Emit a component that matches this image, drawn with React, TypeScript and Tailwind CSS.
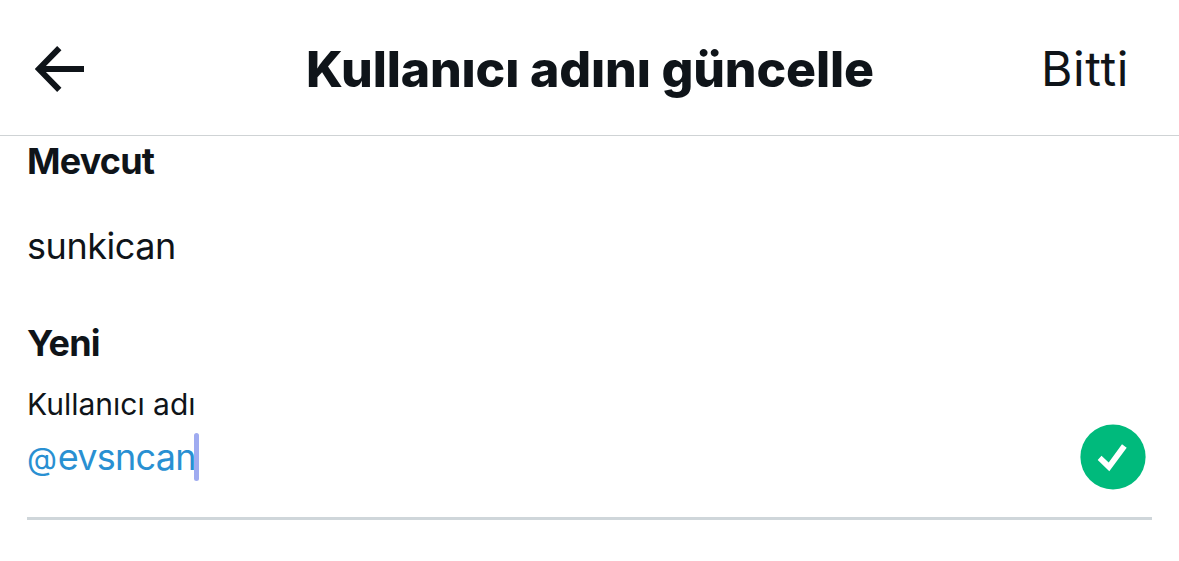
import React, { useState } from 'react'

const BackArrow = () => (
  <svg width="50" height="46" viewBox="0 0 50 46" fill="none" stroke="currentColor">
    <path d="M24.3 2.2L3.9 23L24.3 43.8" strokeWidth="6" />
    <path d="M4.5 23H49" strokeWidth="6" />
  </svg>
)

const ValidBadge = () => (
  <svg width="66" height="66" viewBox="0 0 66 66">
    <circle cx="33" cy="33" r="32.6" fill="#00ba7c" />
    <path d="M17.7 36L29.3 47.2L46.7 23.7L42 20.2L28.7 38.6L21.5 31.7Z" fill="#fff" />
  </svg>
)

const App = () => {
  const [current] = useState('sunkican')
  const [username] = useState('evsncan')

  return (
    <div className="h-[561px] w-[1179px] overflow-hidden bg-white font-['Inter',sans-serif] text-[#0f1419]">
      {/* Header */}
      <header className="flex h-[136px] items-center border-b border-[#cfd3d5] pt-[3px] pr-[50px] pl-[35px]">
        <button type="button" className="w-[271px]" aria-label="Geri">
          <BackArrow />
        </button>
        <h1 className="text-[50px] leading-[60px] font-extrabold tracking-[-0.15px] whitespace-nowrap">
          Kullanıcı adını güncelle
        </h1>
        <button type="button" className="ml-auto text-[48px] leading-[60px] tracking-[0.6px]">
          Bitti
        </button>
      </header>

      {/* Current and new username */}
      <main className="flex flex-col pt-[3px] pr-[27px] pl-[27px]">
        <h2 className="text-[36px] leading-[44px] font-bold tracking-[-0.8px]">Mevcut</h2>
        <p className="mt-[41px] text-[36px] leading-[44px] tracking-[-0.45px]">{current}</p>
        <h2 className="mt-[53px] text-[36px] leading-[44px] font-bold tracking-[-0.8px]">Yeni</h2>
        <div className="mt-[21px] flex h-[134px] items-start justify-between border-b-[3px] border-[#cfd6da]">
          <div className="flex flex-col">
            <span className="text-[30px] leading-[36px]">Kullanıcı adı</span>
            <div className="mt-[11px] flex h-[48px] items-center">
              <span className="w-[167px] text-[36px] leading-[48px] tracking-[-0.75px] whitespace-nowrap text-[#2990d2]">
                <span className="mr-[1.5px] text-[31px] leading-none">@</span>
                {username}
              </span>
              <span className="h-[48px] w-[5px] rounded-sm bg-[#9fabf0]"></span>
            </div>
          </div>
          <div className="mt-[38px] mr-[6px]">
            <ValidBadge />
          </div>
        </div>
      </main>
    </div>
  )
}

export default App
